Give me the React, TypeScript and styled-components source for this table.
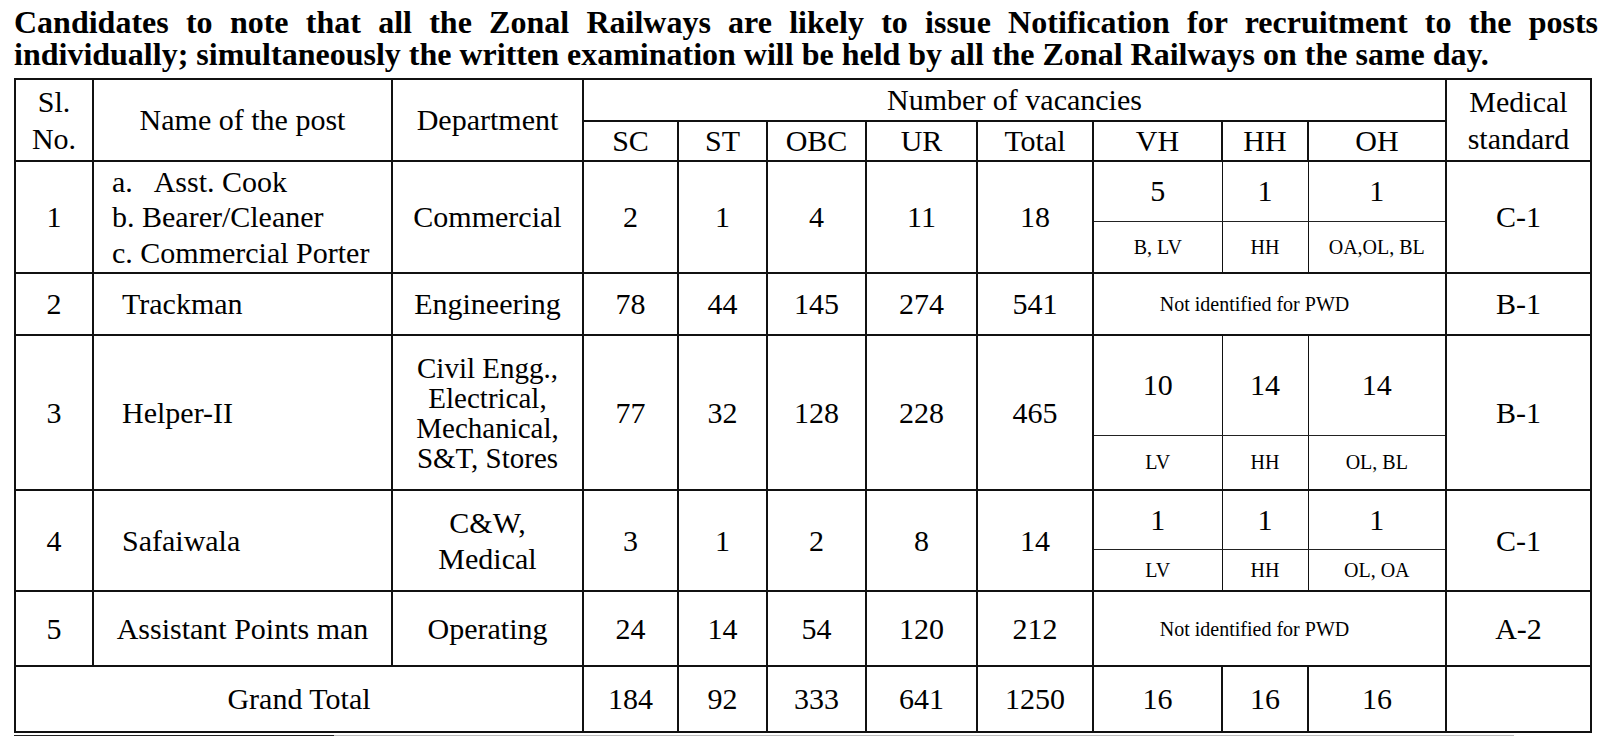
import React from "react";
import styled, { createGlobalStyle } from "styled-components";

const GlobalStyle = createGlobalStyle`
  html, body {
    margin: 0;
    padding: 0;
    background: #ffffff;
  }
  body {
    font-family: "Liberation Serif", "Times New Roman", serif;
    color: #000000;
  }
`;

const Page = styled.div`
  padding: 6px 2px 0 14px;
`;

const Notice = styled.p`
  margin: 0 0 8px;
  font-size: 32px;
  line-height: 32px;
  font-weight: bold;
  text-align: justify;
  text-align-last: left;
`;

const Grid = styled.table`
  width: 1576px;
  table-layout: fixed;
  border-collapse: collapse;
  border: 2px solid #111;
`;

const Col = styled.col<{ $w: number }>`
  width: ${({ $w }) => $w}px;
`;

const Row = styled.tr<{ $h: number }>`
  height: ${({ $h }) => $h}px;
`;

const Cell = styled.td<{
  $small?: boolean;
  $left?: number;
  $lh?: number;
  $fs?: number;
  $shift?: number;
  $thin?: "top" | "bottom";
}>`
  padding: 0 ${({ $shift }) => ($shift ? `${$shift}px` : "0")} 0
    ${({ $left }) => ($left ? `${$left}px` : "0")};
  border: 2px solid #111;
  ${({ $thin }) => ($thin ? `border-${$thin}: 1px solid #222;` : "")}
  text-align: ${({ $left }) => ($left ? "left" : "center")};
  vertical-align: middle;
  font-size: ${({ $small, $fs }) => ($fs ? `${$fs}px` : $small ? "20px" : "30px")};
  line-height: ${({ $lh }) => ($lh ? `${$lh}px` : "1.2")};
  white-space: nowrap;
`;

const SubCell = styled(Cell)`
  border-left-width: 1px;
  border-right-width: 1px;
`;

const PostList = styled.div`
  padding-left: 18px;
  text-align: left;
  line-height: 35.5px;
`;

const Trail = styled.div`
  width: 1576px;
  height: 1px;
  margin-top: 2px;
  background: linear-gradient(
    to right,
    #222 0,
    #222 320px,
    #bbb 320px,
    #bbb 1500px,
    transparent 1500px
  );
`;

const cols = [78, 299, 191, 95, 89, 99, 111, 116, 129, 86, 138, 145];

type Split = { nums: string[]; codes: string[]; h: [number, number] };

type Post = {
  no: string;
  name: React.ReactNode;
  indent?: number;
  dept: string[];
  deptLh?: number;
  deptFs?: number;
  counts: string[];
  split?: Split;
  medical: string;
  h: number;
};

const posts: Post[] = [
  {
    no: "1",
    name: (
      <PostList>
        <div>a.&nbsp;&nbsp; Asst. Cook</div>
        <div>b. Bearer/Cleaner</div>
        <div>c. Commercial Porter</div>
      </PostList>
    ),
    dept: ["Commercial"],
    counts: ["2", "1", "4", "11", "18"],
    split: { nums: ["5", "1", "1"], codes: ["B, LV", "HH", "OA,OL, BL"], h: [60, 52] },
    medical: "C-1",
    h: 112,
  },
  {
    no: "2",
    name: "Trackman",
    indent: 28,
    dept: ["Engineering"],
    counts: ["78", "44", "145", "274", "541"],
    medical: "B-1",
    h: 62,
  },
  {
    no: "3",
    name: "Helper-II",
    indent: 28,
    dept: ["Civil Engg.,", "Electrical,", "Mechanical,", "S&T, Stores"],
    deptLh: 30,
    deptFs: 29,
    counts: ["77", "32", "128", "228", "465"],
    split: { nums: ["10", "14", "14"], codes: ["LV", "HH", "OL, BL"], h: [100, 55] },
    medical: "B-1",
    h: 155,
  },
  {
    no: "4",
    name: "Safaiwala",
    indent: 28,
    dept: ["C&W,", "Medical"],
    deptLh: 36,
    counts: ["3", "1", "2", "8", "14"],
    split: { nums: ["1", "1", "1"], codes: ["LV", "HH", "OL, OA"], h: [59, 42] },
    medical: "C-1",
    h: 101,
  },
  {
    no: "5",
    name: "Assistant Points man",
    dept: ["Operating"],
    counts: ["24", "14", "54", "120", "212"],
    medical: "A-2",
    h: 75,
  },
];

const PostRows: React.FC<{ post: Post }> = ({ post }) => {
  const span = post.split ? 2 : 1;
  const lead = (
    <>
      <Cell rowSpan={span}>{post.no}</Cell>
      <Cell rowSpan={span} $left={post.indent}>
        {post.name}
      </Cell>
      <Cell rowSpan={span} $lh={post.deptLh} $fs={post.deptFs}>
        {post.dept.map((line) => (
          <div key={line}>{line}</div>
        ))}
      </Cell>
      {post.counts.map((c, i) => (
        <Cell key={i} rowSpan={span}>
          {c}
        </Cell>
      ))}
    </>
  );

  if (!post.split) {
    return (
      <Row $h={post.h}>
        {lead}
        <Cell colSpan={3} $small $shift={30}>
          Not identified for PWD
        </Cell>
        <Cell>{post.medical}</Cell>
      </Row>
    );
  }

  const { nums, codes, h } = post.split;
  return (
    <>
      <Row $h={h[0]}>
        {lead}
        {nums.map((n, i) => (
          <SubCell key={i} $thin="bottom">
            {n}
          </SubCell>
        ))}
        <Cell rowSpan={2}>{post.medical}</Cell>
      </Row>
      <Row $h={h[1]}>
        {codes.map((c, i) => (
          <SubCell key={i} $thin="top" $small>
            {c}
          </SubCell>
        ))}
      </Row>
    </>
  );
};

export default function App() {
  return (
    <>
      <GlobalStyle />
      <Page>
        <Notice>
          Candidates to note that all the Zonal Railways are likely to issue
          Notification for recruitment to the posts individually;
          simultaneously the written examination will be held by all the Zonal
          Railways on the same day.
        </Notice>
        <Grid>
          <colgroup>
            {cols.map((w, i) => (
              <Col key={i} $w={w} />
            ))}
          </colgroup>
          <tbody>
            <Row $h={42}>
              <Cell rowSpan={2} $lh={37}>
                Sl.
                <br />
                No.
              </Cell>
              <Cell rowSpan={2}>Name of the post</Cell>
              <Cell rowSpan={2}>Department</Cell>
              <Cell colSpan={8}>Number of vacancies</Cell>
              <Cell rowSpan={2} $lh={37}>
                Medical
                <br />
                standard
              </Cell>
            </Row>
            <Row $h={40}>
              {["SC", "ST", "OBC", "UR", "Total", "VH", "HH", "OH"].map((h) => (
                <Cell key={h}>{h}</Cell>
              ))}
            </Row>
            {posts.map((p) => (
              <PostRows key={p.no} post={p} />
            ))}
            <Row $h={66}>
              <Cell colSpan={3}>Grand Total</Cell>
              {["184", "92", "333", "641", "1250", "16", "16", "16"].map((t, i) => (
                <Cell key={i}>{t}</Cell>
              ))}
              <Cell />
            </Row>
          </tbody>
        </Grid>
        <Trail />
      </Page>
    </>
  );
}
